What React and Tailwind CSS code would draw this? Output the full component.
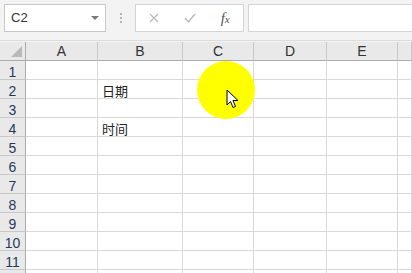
import React from "react";

const cols = ["A", "B", "C", "D", "E", ""];
const rows = [1, 2, 3, 4, 5, 6, 7, 8, 9, 10, 11, 12];

const cellText = {
  "B2": "日期",
  "B4": "时间",
};

function Toolbar() {
  return (
    <div className="h-[41px] bg-[#f3f3f3] border-b border-[#dcdcdc] flex items-start pt-[4px] pl-[4px]">
      {/* Name box */}
      <div className="w-[102px] h-[28px] bg-white border border-[#c9c9c9] flex items-center justify-between pl-[6px] pr-[6px]">
        <span className="text-[13px] text-[#333] font-['Liberation_Sans',sans-serif]">C2</span>
        <svg width="8" height="5" viewBox="0 0 8 5">
          <path d="M0 0 L8 0 L4 4 Z" fill="#7a7a7a" />
        </svg>
      </div>
      {/* dotted separator */}
      <div className="w-[29px] h-[28px] flex flex-col items-center justify-center gap-[2px]">
        <span className="w-[2px] h-[2px] bg-[#b5b5b5]" />
        <span className="w-[2px] h-[2px] bg-[#b5b5b5]" />
        <span className="w-[2px] h-[2px] bg-[#b5b5b5]" />
      </div>
      {/* function buttons */}
      <div className="w-[109px] h-[28px] bg-white border border-[#d4d4d4] flex items-center">
        <div className="w-[36px] flex justify-center">
          <svg width="10" height="10" viewBox="0 0 10 10">
            <path d="M1 1 L9 9 M9 1 L1 9" stroke="#b8b8b8" strokeWidth="1.2" />
          </svg>
        </div>
        <div className="w-[36px] flex justify-center">
          <svg width="12" height="10" viewBox="0 0 12 10">
            <path d="M1 5 L4.5 9 L11 1" stroke="#b8b8b8" strokeWidth="1.3" fill="none" />
          </svg>
        </div>
        <div className="w-[36px] flex justify-center">
          <span className="text-[15px] italic text-[#555] font-['Liberation_Serif',serif] leading-none">
            f<span className="text-[11px]">x</span>
          </span>
        </div>
      </div>
      {/* formula input */}
      <div className="ml-[4px] flex-1 h-[28px] bg-white border border-[#d4d4d4] border-r-0" />
    </div>
  );
}

function Sheet() {
  return (
    <div className="grid grid-cols-[26px_72px_85px_71px_73px_71px_1fr] font-['Liberation_Sans','Noto_Sans_CJK_SC',sans-serif]">
      {/* corner */}
      <div className="h-[19px] bg-[#e9e9e9] border-r border-b border-[#ababab] flex items-end justify-end pr-[3px] pb-[3px]">
        <svg width="11" height="11" viewBox="0 0 11 11">
          <path d="M11 0 L11 11 L0 11 Z" fill="#b9b9b9" />
        </svg>
      </div>
      {cols.map((c, i) => (
        <div
          key={"h" + i}
          className="h-[19px] bg-[#e9e9e9] border-r border-b border-r-[#c8c8c8] border-b-[#ababab] flex items-center justify-center pt-[1px] text-[14px] text-[#333]"
        >
          {c}
        </div>
      ))}
      {rows.map((r) => (
        <React.Fragment key={r}>
          <div className="h-[19px] bg-[#e9e9e9] border-r border-b border-r-[#ababab] border-b-[#c8c8c8] flex items-center justify-center pt-[5px] text-[14px] text-[#1f3a5f]">
            {r < 12 ? r : ""}
          </div>
          {cols.map((c, i) => (
            <div
              key={c + i}
              className="h-[19px] bg-white border-r border-b border-[#d9d9d9] flex items-center pl-[4px] pt-[3px] text-[13px] text-[#222] font-['Noto_Sans_CJK_SC',sans-serif]"
            >
              {cellText[c + r] || ""}
            </div>
          ))}
        </React.Fragment>
      ))}
    </div>
  );
}

export default function App() {
  return (
    <div className="relative w-[412px] h-[273px] overflow-hidden bg-white">
      <Toolbar />
      <div className="h-[1px] bg-[#f3f3f3]" />
      <Sheet />
      {/* cursor highlight */}
      <div className="absolute left-[197px] top-[61px] w-[58px] h-[58px] rounded-full bg-[#ffff00]" />
      <svg className="absolute left-[226px] top-[89px]" width="14" height="20" viewBox="0 0 14 20">
        <path
          d="M1 1 L1 16 L4.5 12.5 L7 18.5 L9.5 17.5 L7 11.5 L12 11.5 Z"
          fill="#fff"
          stroke="#000"
          strokeWidth="1"
          strokeLinejoin="round"
        />
      </svg>
    </div>
  );
}
